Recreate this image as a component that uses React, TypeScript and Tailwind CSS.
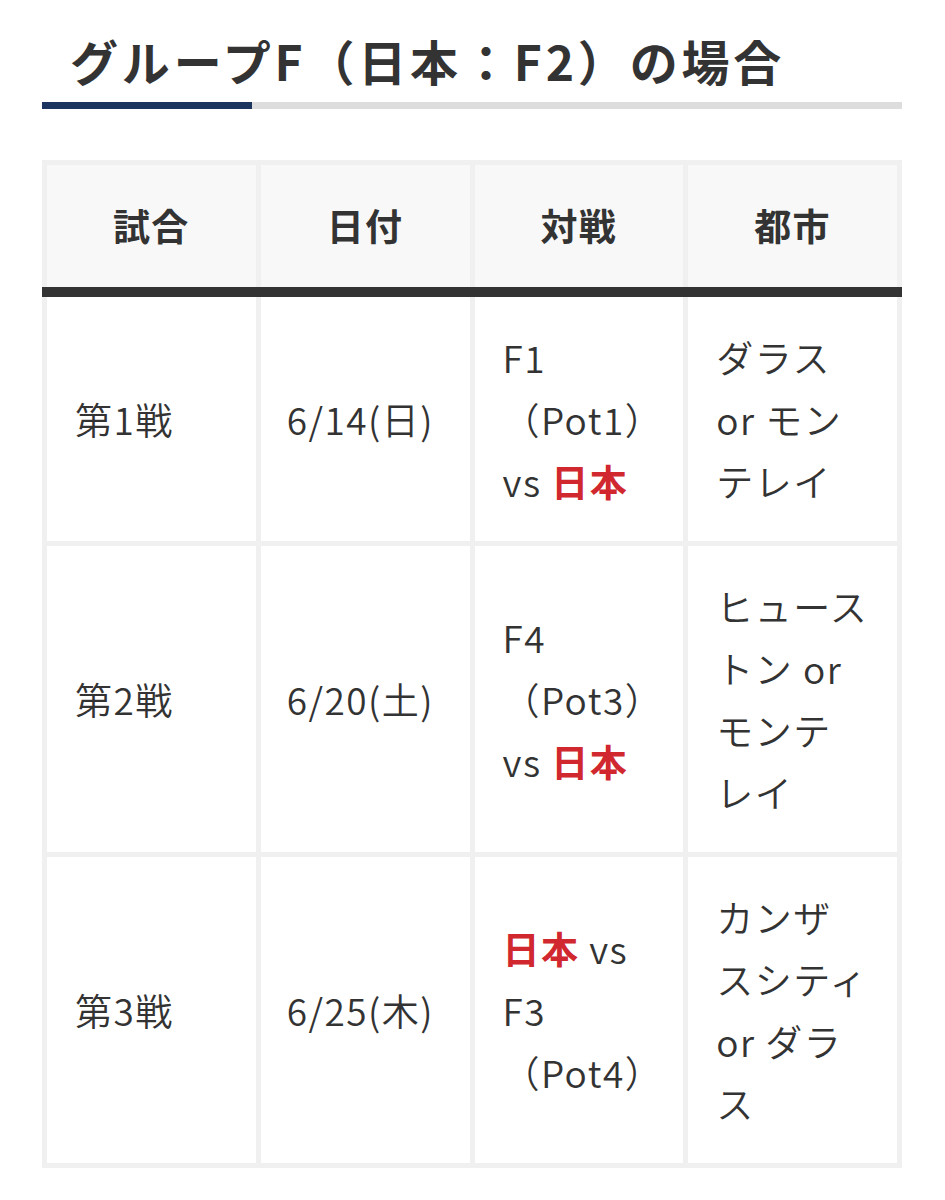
import React from 'react';

type Row = {
  match: string;
  date: string;
  versus: React.ReactNode;
  city: string[];
};

const Japan = () => <span className="font-bold text-[#d0282e]">日本</span>;

const rows: Row[] = [
  {
    match: '第1戦',
    date: '6/14(日)',
    versus: (
      <>
        F1
        <br />
        （Pot1）
        <br />
        vs <Japan />
      </>
    ),
    city: ['ダラス', 'or モン', 'テレイ'],
  },
  {
    match: '第2戦',
    date: '6/20(土)',
    versus: (
      <>
        F4
        <br />
        （Pot3）
        <br />
        vs <Japan />
      </>
    ),
    city: ['ヒュース', 'トン or', 'モンテ', 'レイ'],
  },
  {
    match: '第3戦',
    date: '6/25(木)',
    versus: (
      <>
        <Japan /> vs
        <br />
        F3
        <br />
        （Pot4）
      </>
    ),
    city: ['カンザ', 'スシティ', 'or ダラ', 'ス'],
  },
];

const headers = ['試合', '日付', '対戦', '都市'];

const App: React.FC = () => {
  return (
    <div
      className="min-h-screen bg-white text-[#333333] pt-[20px]"
      style={{ fontFamily: '"Noto Sans CJK JP", "Noto Sans", sans-serif' }}
    >
      <div className="ml-[42px] w-[860px]">
        {/* Heading */}
        <h2 className="pl-[28px] text-[48px] font-bold leading-[80px] tracking-[0.08em]">
          グループF（日本：F2）の場合
        </h2>
        <div className="mt-[2px] flex h-[7px] bg-[#dddddd]">
          <div className="w-[210px] bg-[#1c355e]"></div>
        </div>

        {/* Table */}
        <div className="mt-[51px] bg-[#f0f0f0]">
          <div className="grid grid-cols-4 gap-[5px] px-[5px] pt-[5px]">
            {headers.map((h) => (
              <div
                key={h}
                className="flex h-[122px] items-center justify-center bg-[#f8f8f8] text-[37px] font-bold tracking-[0.04em]"
              >
                {h}
              </div>
            ))}
          </div>
          <div className="h-[10px] bg-[#333333]"></div>
          <div className="flex flex-col gap-[5px] px-[5px] pb-[5px]">
            {rows.map((r) => (
              <div
                key={r.match}
                className="grid grid-cols-4 gap-[5px] text-[37px] font-[350] leading-[62px] tracking-[0.04em]"
              >
                <div className="flex items-center bg-white px-[28px] py-[29px]">{r.match}</div>
                <div className="flex items-center bg-white px-[26px] py-[29px]">{r.date}</div>
                <div className="flex items-center bg-white px-[28px] py-[29px]">
                  <div>{r.versus}</div>
                </div>
                <div className="flex items-center bg-white px-[28px] py-[29px]">
                  <div>
                    {r.city.map((c) => (
                      <div key={c}>{c}</div>
                    ))}
                  </div>
                </div>
              </div>
            ))}
          </div>
        </div>
      </div>
    </div>
  );
};

export default App;
